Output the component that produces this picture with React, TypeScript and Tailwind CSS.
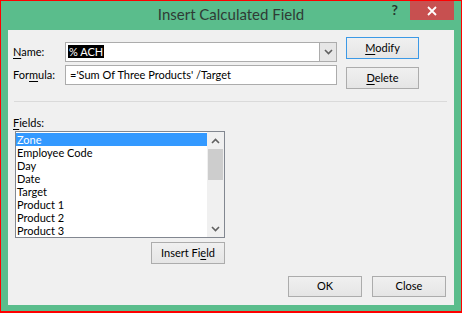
import React from "react";

const font = { fontFamily: "Lato, 'Noto Sans', sans-serif" };

function Btn({ children, className = "", blue = false }: { children: React.ReactNode; className?: string; blue?: boolean }) {
  return (
    <div
      className={`flex items-center justify-center border ${blue ? "border-[#3c99e6]" : "border-[#acacac]"} bg-gradient-to-b from-[#f0f0f0] to-[#e5e5e5] text-[11px] text-black ${className}`}
    >
      {children}
    </div>
  );
}

function Chevron({ up = false, color = "#606060" }: { up?: boolean; color?: string }) {
  return (
    <svg width="9" height="6" viewBox="0 0 9 6">
      {up ? (
        <polyline points="1,5 4.5,1.5 8,5" fill="none" stroke={color} strokeWidth="1.6" />
      ) : (
        <polyline points="1,1 4.5,4.5 8,1" fill="none" stroke={color} strokeWidth="1.6" />
      )}
    </svg>
  );
}

const items = ["Zone", "Employee Code", "Day", "Date", "Target", "Product 1", "Product 2", "Product 3"];

export default function App() {
  return (
    <div style={font} className="w-[462px] h-[313px] bg-[#5abd8c] border border-b-2 border-[#ff0000] flex flex-col">
      {/* title bar */}
      <div className="h-[29px] flex items-start relative">
        <div className="absolute left-0 right-0 top-[3px] text-center text-[15px] leading-[20px] text-[#2f3b35]">
          Insert Calculated Field
        </div>
        <div className="ml-auto flex items-start">
          <div className="mt-[1px] mr-[12px] text-[14px] font-bold leading-[16px] text-[#263a30]">?</div>
          <div className="w-[44px] h-[19px] mr-[7px] bg-[#c75050] flex items-center justify-center">
            <svg width="10" height="10" viewBox="0 0 10 10">
              <path d="M1 1 L9 9 M9 1 L1 9" stroke="white" strokeWidth="1.8" />
            </svg>
          </div>
        </div>
      </div>

      {/* client */}
      <div className="mx-[7px] h-[275px] bg-[#f0f0f0] pl-[5px] pt-[7px] flex flex-col text-[11px] text-black">
        <div className="flex items-start">
          <div className="flex flex-col pt-[5px]">
            <div className="flex items-center h-[20px]">
              <div className="w-[52px]">
                <span className="underline underline-offset-2">N</span>ame:
              </div>
              <div className="w-[272px] h-[20px] border border-[#acacac] bg-white flex items-center">
                <div className="flex-1 pl-[2px]">
                  <span className="bg-black text-white px-[1px]">% ACH</span>
                </div>
                <div className="w-[17px] h-full border-l border-[#acacac] bg-[#e6e6e6] flex items-center justify-center">
                  <Chevron />
                </div>
              </div>
            </div>
            <div className="flex items-center h-[20px] mt-[3px]">
              <div className="w-[52px]">
                For<span className="underline underline-offset-2">m</span>ula:
              </div>
              <div className="w-[272px] h-[20px] border border-[#acacac] bg-white flex items-center pl-[4px]">
                ='Sum Of Three Products' /Target
              </div>
            </div>
          </div>
          <div className="ml-[9px] flex flex-col">
            <Btn blue className="w-[73px] h-[22px]">
              <span><span className="underline underline-offset-2">M</span>odify</span>
            </Btn>
            <Btn className="w-[73px] h-[22px] mt-[8px]">
              <span><span className="underline underline-offset-2">D</span>elete</span>
            </Btn>
          </div>
        </div>

        <div className="mt-[12px] ml-[1px] w-[433px] h-px bg-[#dadada]" />

        <div className="mt-[13px] h-[15px] leading-[15px]">
          <span className="underline underline-offset-2">F</span>ields:
        </div>

        <div className="mt-[1px] ml-[2px] w-[210px] h-[107px] border border-[#828790] bg-white flex">
          <div className="w-[191px] pt-[1px]">
            {items.map((it, i) => (
              <div
                key={it}
                className={`h-[13px] leading-[13px] pl-[1px] ${i === 0 ? "bg-[#3399ff] text-white" : ""}`}
              >
                {it}
              </div>
            ))}
          </div>
          <div className="w-[17px] bg-[#f0f0f0] flex flex-col">
            <div className="h-[17px] flex items-center justify-center">
              <Chevron up />
            </div>
            <div className="mx-[1px] h-[31px] bg-[#cdcdcd]" />
            <div className="flex-1" />
            <div className="h-[17px] flex items-center justify-center">
              <Chevron />
            </div>
          </div>
        </div>

        <Btn className="mt-[4px] ml-[138px] w-[74px] h-[22px]">
          <span>
            Insert Fi<span className="underline underline-offset-2">e</span>ld
          </span>
        </Btn>

        <div className="mt-[12px] flex justify-end gap-[10px] pr-[8px]">
          <Btn className="w-[74px] h-[21px]">OK</Btn>
          <Btn className="w-[74px] h-[21px]">Close</Btn>
        </div>
      </div>
    </div>
  );
}
